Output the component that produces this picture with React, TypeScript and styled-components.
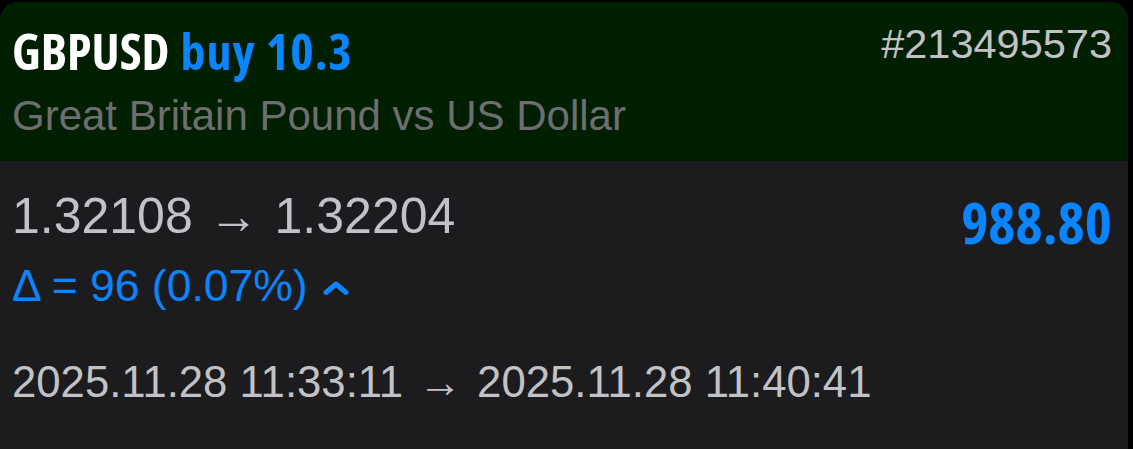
import React from "react";
import styled, { createGlobalStyle } from "styled-components";

const colors = {
  page: "#000000",
  header: "#001f00",
  body: "#1c1c1e",
  white: "#ffffff",
  blue: "#0a84ff",
  light: "#c2c2c6",
  dim: "#6e6e70",
};

const sans = `"Liberation Sans", Arial, Helvetica, sans-serif`;
const condensed = `"Open Sans", "Liberation Sans", sans-serif`;

const GlobalStyle = createGlobalStyle`
  html, body {
    margin: 0;
    padding: 0;
    background: ${colors.page};
  }
  body {
    font-family: ${sans};
  }
`;

const Card = styled.div`
  margin: 2px 5px 0 0;
  border-radius: 18px 18px 0 0;
  overflow: hidden;
  min-height: 447px;
  background: ${colors.body};
`;

const Header = styled.div`
  height: 159px;
  box-sizing: border-box;
  padding: 24px 16px 0 12px;
  background: ${colors.header};
  display: flex;
  flex-direction: column;
`;

const TopRow = styled.div`
  display: flex;
  justify-content: space-between;
  align-items: flex-start;
`;

const Title = styled.div`
  font-family: ${condensed};
  font-weight: 700;
  font-stretch: 75%;
  font-size: 50px;
  line-height: 50px;
  white-space: nowrap;
`;

const Symbol = styled.span`
  color: ${colors.white};
`;

const Side = styled.span`
  margin-left: 2px;
  letter-spacing: 1px;
  color: ${colors.blue};
`;

const OrderId = styled.div`
  font-size: 41.5px;
  line-height: 36px;
  color: ${colors.light};
`;

const Subtitle = styled.div`
  margin-top: 15px;
  font-size: 42px;
  line-height: 50px;
  color: ${colors.dim};
  white-space: nowrap;
`;

const Body = styled.div`
  padding: 27px 16px 0 12px;
`;

const PriceRow = styled.div`
  display: flex;
  justify-content: space-between;
  align-items: flex-start;
`;

const Prices = styled.div`
  font-size: 50px;
  line-height: 56px;
  color: ${colors.light};
  white-space: nowrap;
`;

const Arrow = styled.span<{ $gap: number }>`
  display: inline-block;
  padding: 0 ${(p) => p.$gap}px;
`;

const Profit = styled.div`
  margin-top: 6px;
  font-family: ${condensed};
  font-weight: 700;
  font-stretch: 75%;
  font-size: 58px;
  line-height: 56px;
  color: ${colors.blue};
`;

const Delta = styled.div`
  margin-top: 17px;
  display: flex;
  align-items: center;
  font-size: 44.5px;
  line-height: 50px;
  color: ${colors.blue};
  white-space: nowrap;
`;

const Chevron = styled.svg`
  margin-left: 15px;
  margin-top: 4px;
`;

const Times = styled.div`
  margin-top: 46px;
  font-size: 43.7px;
  line-height: 50px;
  color: ${colors.light};
  white-space: nowrap;
`;

const trade = {
  symbol: "GBPUSD",
  side: "buy 10.3",
  id: "#213495573",
  name: "Great Britain Pound vs US Dollar",
  open: "1.32108",
  close: "1.32204",
  profit: "988.80",
  delta: "Δ = 96 (0.07%)",
  openTime: "2025.11.28 11:33:11",
  closeTime: "2025.11.28 11:40:41",
};

function App() {
  return (
    <>
      <GlobalStyle />
      <Card>
        <Header>
          <TopRow>
            <Title>
              <Symbol>{trade.symbol}</Symbol> <Side>{trade.side}</Side>
            </Title>
            <OrderId>{trade.id}</OrderId>
          </TopRow>
          <Subtitle>{trade.name}</Subtitle>
        </Header>
        <Body>
          <PriceRow>
            <div>
              <Prices>
                {trade.open} <Arrow $gap={2}>→</Arrow> {trade.close}
              </Prices>
              <Delta>
                {trade.delta}
                <Chevron width="26" height="14" viewBox="0 0 26 14">
                  <polyline
                    points="3,11.5 13,3 23,11.5"
                    fill="none"
                    stroke={colors.blue}
                    strokeWidth="5"
                    strokeLinecap="round"
                    strokeLinejoin="round"
                  />
                </Chevron>
              </Delta>
            </div>
            <Profit>{trade.profit}</Profit>
          </PriceRow>
          <Times>
            {trade.openTime} <Arrow $gap={3}>→</Arrow> {trade.closeTime}
          </Times>
        </Body>
      </Card>
    </>
  );
}

export default App;
